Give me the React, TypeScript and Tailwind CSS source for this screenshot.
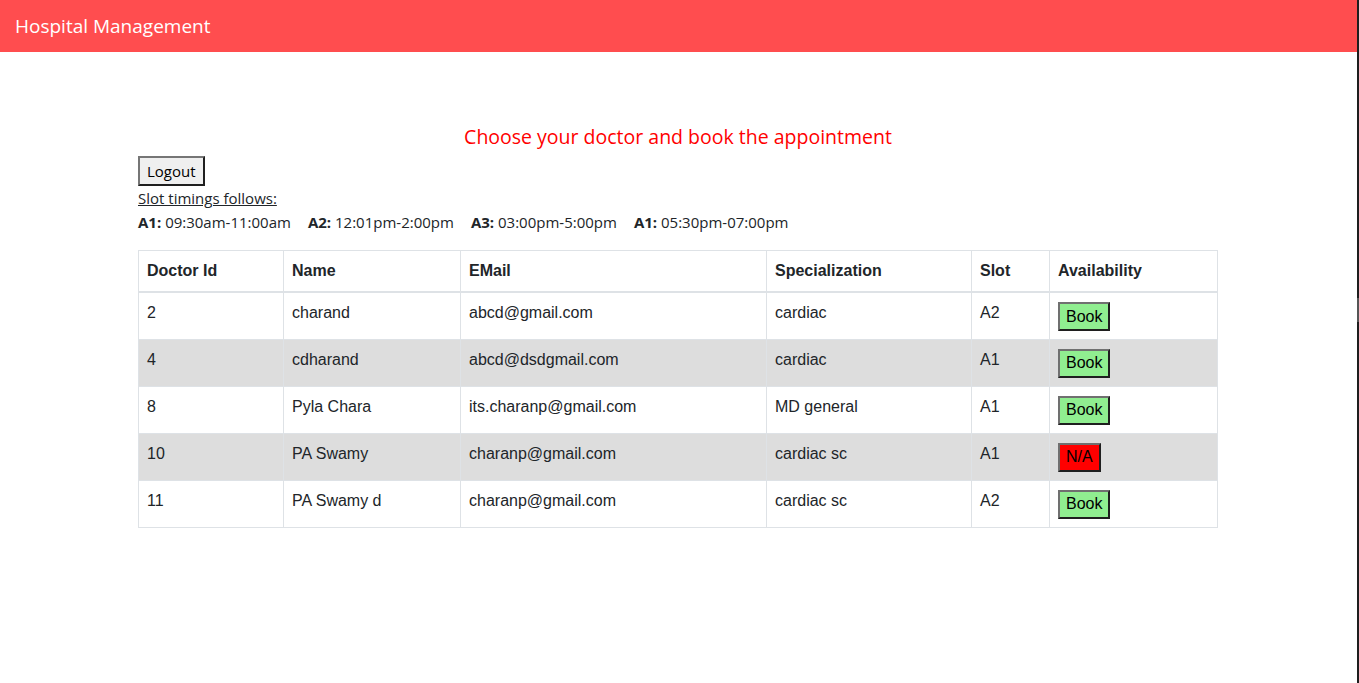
import React from "react";

interface Doctor {
  id: number;
  name: string;
  email: string;
  specialization: string;
  slot: string;
  available: boolean;
}

const DOCTORS: Doctor[] = [
  { id: 2, name: "charand", email: "abcd@gmail.com", specialization: "cardiac", slot: "A2", available: true },
  { id: 4, name: "cdharand", email: "abcd@dsdgmail.com", specialization: "cardiac", slot: "A1", available: true },
  { id: 8, name: "Pyla Chara", email: "its.charanp@gmail.com", specialization: "MD general", slot: "A1", available: true },
  { id: 10, name: "PA Swamy", email: "charanp@gmail.com", specialization: "cardiac sc", slot: "A1", available: false },
  { id: 11, name: "PA Swamy d", email: "charanp@gmail.com", specialization: "cardiac sc", slot: "A2", available: true },
];

const SLOTS = [
  { code: "A1", time: "09:30am-11:00am" },
  { code: "A2", time: "12:01pm-2:00pm" },
  { code: "A3", time: "03:00pm-5:00pm" },
  { code: "A1", time: "05:30pm-07:00pm" },
];

const uiFont = "font-['Open_Sans','Noto_Sans',sans-serif]";
const tableFont = "font-['Liberation_Sans',Arial,sans-serif]";

function OutsetButton({ label, color }: { label: string; color: string }) {
  return (
    <button
      className={`${color} h-[29px] px-[6px] border-2 border-t-[#707070] border-l-[#707070] border-b-[#1f1f1f] border-r-[#1f1f1f] text-[16px] leading-none text-black`}
    >
      {label}
    </button>
  );
}

export default function App() {
  return (
    <div className="flex min-h-screen bg-white">
      <div className="flex-1">
        {/* top bar */}
        <div className="h-[52px] bg-[#ff4d4f] flex items-center pl-[15px]">
          <span className={`${uiFont} text-white text-[19px]`}>Hospital Management</span>
        </div>

        <div className="w-[1080px] ml-[138px] pt-[71px]">
          <h2 className={`${uiFont} text-center text-[#ff0000] text-[19.5px] leading-[28px] font-medium`}>
            Choose your doctor and book the appointment
          </h2>

          <div className={`${uiFont} mt-[5px] text-[#212529]`}>
            <button className="h-[30px] px-[7px] bg-[#efefef] text-black text-[15px] border-2 border-t-[#767676] border-l-[#767676] border-b-[#1f1f1f] border-r-[#1f1f1f] leading-none">
              Logout
            </button>
            <div className="text-[15px] leading-[24px] underline">Slot timings follows:</div>
            <div className="text-[15px] leading-[24px] flex gap-[17px]">
              {SLOTS.map((s, i) => (
                <span key={i}>
                  <b>{s.code}:</b> {s.time}
                </span>
              ))}
            </div>
          </div>

          <table className={`${tableFont} mt-[16px] w-full border-collapse text-[16px] text-[#212529]`}>
            <thead>
              <tr className="text-left">
                <th className="w-[145px] border border-[#dee2e6] border-b-2 px-[8px] py-[8px] leading-[24px] font-bold">Doctor Id</th>
                <th className="w-[177px] border border-[#dee2e6] border-b-2 px-[8px] py-[8px] leading-[24px] font-bold">Name</th>
                <th className="w-[306px] border border-[#dee2e6] border-b-2 px-[8px] py-[8px] leading-[24px] font-bold">EMail</th>
                <th className="w-[205px] border border-[#dee2e6] border-b-2 px-[8px] py-[8px] leading-[24px] font-bold">Specialization</th>
                <th className="w-[78px] border border-[#dee2e6] border-b-2 px-[8px] py-[8px] leading-[24px] font-bold">Slot</th>
                <th className="border border-[#dee2e6] border-b-2 px-[8px] py-[8px] leading-[24px] font-bold">Availability</th>
              </tr>
            </thead>
            <tbody>
              {DOCTORS.map((d, i) => (
                <tr key={d.id} className={i % 2 === 1 ? "bg-[#dddddd]" : "bg-white"}>
                  <td className="h-[47px] align-top border-x border-b border-[#dee2e6] px-[8px] pt-[8px] leading-[24px]">{d.id}</td>
                  <td className="align-top border-x border-b border-[#dee2e6] px-[8px] pt-[8px] leading-[24px]">{d.name}</td>
                  <td className="align-top border-x border-b border-[#dee2e6] px-[8px] pt-[8px] leading-[24px]">{d.email}</td>
                  <td className="align-top border-x border-b border-[#dee2e6] px-[8px] pt-[8px] leading-[24px]">{d.specialization}</td>
                  <td className="align-top border-x border-b border-[#dee2e6] px-[8px] pt-[8px] leading-[24px]">{d.slot}</td>
                  <td className="align-top border-x border-b border-[#dee2e6] px-[8px] pt-[9px] leading-[24px]">
                    {d.available ? (
                      <OutsetButton label="Book" color="bg-[#90ee90]" />
                    ) : (
                      <OutsetButton label="N/A" color="bg-[#ff0000]" />
                    )}
                  </td>
                </tr>
              ))}
            </tbody>
          </table>
        </div>
      </div>

      {/* window edge */}
      <div className="w-[2px] flex flex-col bg-[#1e1e1e]">
        <div className="h-[298px]" />
        <div className="h-[24px] bg-[#555555]" />
      </div>
    </div>
  );
}
